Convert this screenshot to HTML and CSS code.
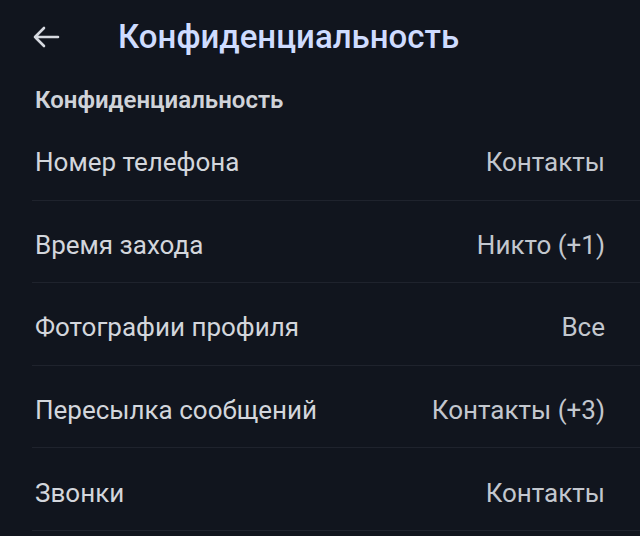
FILE: index.html
```html
<!DOCTYPE html>
<html lang="ru">
  <head>
    <meta charset="UTF-8" />
    <meta name="viewport" content="width=device-width, initial-scale=1.0" />
    <title>Конфиденциальность</title>
    <link rel="stylesheet" href="styles.css">
  </head>

  <body>
    <div class="topbar">
      <div class="back">
        <svg width="28" height="22" viewBox="0 0 28 22">
          <path d="M26 11H3M12 2L3 11l9 9" fill="none" stroke="#d6d9e0" stroke-width="2.6" stroke-linecap="round" stroke-linejoin="round"/>
        </svg>
      </div>
      <div class="title">Конфиденциальность</div>
    </div>

    <div class="section">Конфиденциальность</div>

    <div class="list">
      <div class="row">
        <div class="label">Номер телефона</div>
        <div class="value">Контакты</div>
      </div>
      <div class="row">
        <div class="label">Время захода</div>
        <div class="value">Никто (+1)</div>
      </div>
      <div class="row">
        <div class="label">Фотографии профиля</div>
        <div class="value">Все</div>
      </div>
      <div class="row">
        <div class="label">Пересылка сообщений</div>
        <div class="value">Контакты (+3)</div>
      </div>
      <div class="row">
        <div class="label">Звонки</div>
        <div class="value">Контакты</div>
      </div>
    </div>
  </body>
</html>
```

FILE: styles.css
```css
* {
  box-sizing: border-box;
}
body {
  margin: 0;
  background: #11151e;
  font-family: Roboto, "Noto Sans", sans-serif;
  color: #d3d6dc;
  overflow: hidden;
}

.topbar {
  height: 76px;
  display: flex;
  align-items: center;
  padding-left: 32px;
}

.back {
  width: 86px;
  display: flex;
  align-items: center;
  margin-top: -2px;
}

.title {
  font-size: 33px;
  font-weight: 500;
  color: #cfdcff;
  margin-top: -3px;
}

.section {
  padding-left: 35px;
  font-size: 24px;
  font-weight: 600;
  color: #d0d3d9;
  margin-top: 8px;
  height: 34px;
  line-height: 32px;
}

.list {
  padding-left: 32px;
}

.row {
  height: 82.6px;
  display: flex;
  justify-content: space-between;
  align-items: center;
  padding: 7px 35px 0 3px;
  border-bottom: 1.5px solid #1f232d;
  font-size: 26px;
}

.label {
  color: #d3d6dc;
}

.value {
  color: #c3c7ce;
}
```
